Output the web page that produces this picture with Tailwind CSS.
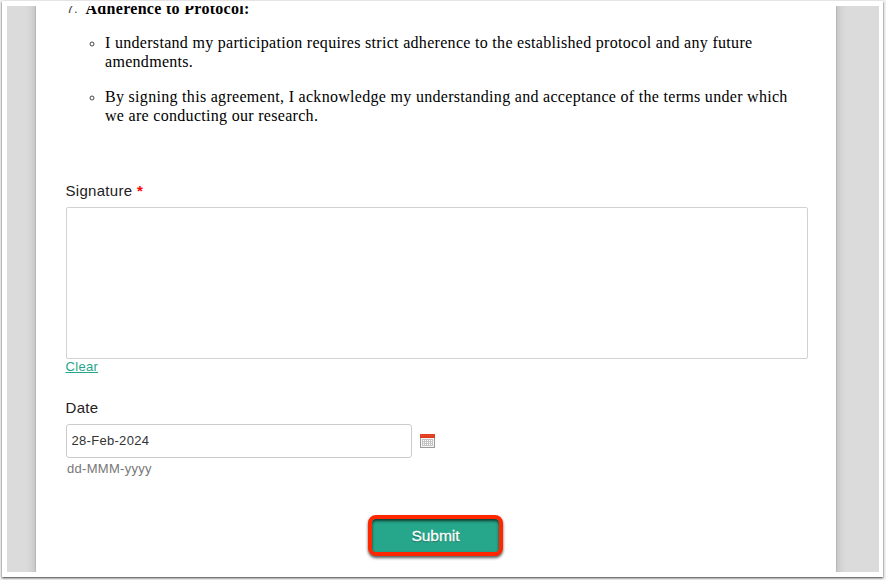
<!DOCTYPE html>
<html lang="en">
<head>
    <meta charset="UTF-8">
    <meta name="viewport" content="width=device-width, initial-scale=1.0">
    <title>Research Agreement</title>
    <script src="https://cdn.jsdelivr.net/npm/@tailwindcss/browser@4"></script>
</head>
<body class="bg-[#f2f2f2] h-[580px] overflow-hidden pl-[2px] pt-[1px] font-['Liberation_Sans',Arial,sans-serif]">
    <div class="w-[881px] h-[576px] bg-white p-[5px] shadow-[0_1px_2px_rgba(0,0,0,0.75)]">
        <div class="w-[872px] h-[566px] bg-[#dbdbdb] overflow-hidden pl-[29px]">
            <!-- Form page -->
            <div class="w-[800px] h-[590px] bg-white pl-[29.5px] shadow-[0_0_10px_rgba(0,0,0,0.2),0_0_1px_rgba(0,0,0,0.4)]">
                <div class="-mt-[8px] h-[184px] pt-px font-['Liberation_Serif','Times_New_Roman',serif] text-[16px] leading-[19px] tracking-[0.3px] text-black whitespace-nowrap">
                    <div class="flex">
                        <span class="w-[20px] pl-px font-['Liberation_Sans',Arial,sans-serif] text-[13px] text-[#444]">7.</span>
                        <strong>Adherence to Protocol:</strong>
                    </div>
                    <ul class="pl-[23.5px] pt-[15px] space-y-4">
                        <li class="flex">
                            <svg class="mt-[8px] mr-[10px]" width="6" height="6" viewBox="0 0 6 6"><circle cx="3" cy="3" r="2" fill="none" stroke="#333" stroke-width="0.9"/></svg>
                            <span>I understand my participation requires strict adherence to the established protocol and any future<br>amendments.</span>
                        </li>
                        <li class="flex">
                            <svg class="mt-[8px] mr-[10px]" width="6" height="6" viewBox="0 0 6 6"><circle cx="3" cy="3" r="2" fill="none" stroke="#333" stroke-width="0.9"/></svg>
                            <span>By signing this agreement, I acknowledge my understanding and acceptance of the terms under which<br>we are conducting our research.</span>
                        </li>
                    </ul>
                </div>

                <div class="text-[15px] leading-[17px] tracking-[0.3px] text-[#222]">Signature <span class="text-[#f00] font-bold">*</span></div>
                <div class="mt-[8px] ml-[0.5px] w-[742px] h-[152px] border border-[#d2d2d2] rounded-[2px]"></div>
                <a class="block w-fit text-[13px] leading-[15px] tracking-[0.3px] text-[#26a68a] underline">Clear</a>

                <label for="date" class="block mt-[25px] text-[15px] leading-[17px] tracking-[0.3px] text-[#222]">Date</label>
                <div class="mt-[8px] ml-[0.5px] flex items-center">
                    <input id="date" type="text" value="28-Feb-2024" class="w-[346px] h-[34px] border border-[#ccc] rounded-[3px] pl-[4.5px] pb-[2px] text-[13px] tracking-[0.3px] text-[#333]">
                    <svg class="ml-2" width="15" height="14" viewBox="0 0 15 14" shape-rendering="crispEdges">
                        <rect width="15" height="14" fill="#9b9b9b"/>
                        <rect x="1" y="4" width="13" height="9" fill="#f4f4f4"/>
                        <rect width="15" height="4" fill="#e03c20"/>
                        <path d="M1 1.5h13" stroke="#e8563c" stroke-dasharray="1 1"/>
                        <rect x="2" y="5" width="11" height="7" fill="#c4c4c4"/>
                        <path d="M3 6.5h10M3 8.5h10M3 10.5h10" stroke="#fff" stroke-dasharray="1 1"/>
                    </svg>
                </div>
                <div class="mt-[3px] pl-[1.5px] text-[13px] leading-[15px] tracking-[0.3px] text-[#777]">dd-MMM-yyyy</div>

                <button class="mt-[39px] ml-[302.5px] block w-[135px] h-[41px] rounded-[8px] border-4 border-[#ff2600] bg-[#26a68a] text-white text-[15.5px] leading-[33px] [-webkit-text-stroke:0.3px_white] [text-shadow:0_1px_1px_rgba(0,0,0,0.4)] shadow-[0_2px_3px_rgba(0,0,0,0.65),inset_0_2px_3px_rgba(0,0,0,0.65)]">Submit</button>
            </div>
        </div>
    </div>
</body>
</html>
